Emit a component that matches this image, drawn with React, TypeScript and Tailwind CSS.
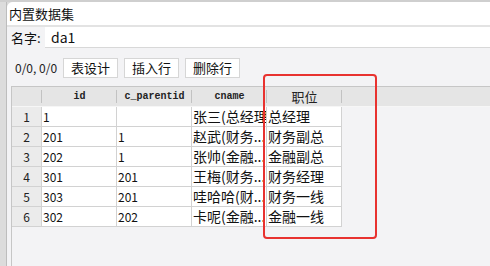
import React from "react";

const rows = [
  ["1", "1", "", "张三(总经理)", "总经理"],
  ["2", "201", "1", "赵武(财务...", "财务副总"],
  ["3", "202", "1", "张帅(金融...", "金融副总"],
  ["4", "301", "201", "王梅(财务...", "财务经理"],
  ["5", "303", "201", "哇哈哈(财...", "财务一线"],
  ["6", "302", "202", "卡呢(金融...", "金融一线"],
];

const sans = { fontFamily: '"Noto Sans CJK SC", "Liberation Sans", sans-serif' };

export default function App() {
  return (
    <div className="relative w-[490px] h-[266px] overflow-hidden bg-[#dadada] flex flex-col" style={sans}>
      <div className="h-[2px] bg-[#cfcfcf] shrink-0" />
      <div className="flex flex-1 min-h-0">
        <div className="w-[7px] bg-[#dcdcdc] border-r border-[#bdbdbd] shrink-0" />
        <div className="flex-1 flex flex-col bg-[#f3f3f5] rounded-tl-[6px] overflow-hidden">
          <div className="h-[25px] bg-white border-b-2 border-[#e3e3e3] flex items-center pl-[2px] text-[13px] text-[#111] shrink-0">
            内置数据集
          </div>
          <div className="flex items-center h-[21px] shrink-0">
            <span className="w-[38px] pl-[4px] text-[13px] text-[#111]">名字:</span>
            <div className="flex-1 h-[21px] bg-white border-b border-[#d8d8d8] flex items-center pl-[6px] text-[14px] text-[#111]">
              da1
            </div>
          </div>
          <div className="flex items-center h-[20px] mt-[10px] shrink-0 pl-[8px]">
            <span className="text-[12px] text-[#222] w-[48px] whitespace-nowrap">0/0, 0/0</span>
            {["表设计", "插入行", "删除行"].map((b) => (
              <div
                key={b}
                className="w-[55px] h-[20px] mr-[6px] bg-white border border-[#d6d6d6] flex items-center justify-center text-[13px] text-[#111]"
              >
                {b}
              </div>
            ))}
          </div>
          <div className="flex-1 mt-[8px] ml-[4px] border-l border-t border-[#c6c6c6] bg-[#f3f3f5] flex flex-col">
            <div className="h-[20px] bg-[#e5e5e5] border-b border-[#f6f6f6] flex shrink-0" style={{ fontFamily: '"Liberation Mono", monospace' }}>
              {[
                [30, ""],
                [75, "id"],
                [75, "c_parentid"],
                [75, "cname"],
                [75, "职位"],
              ].map(([w, t], i) => (
                <div
                  key={i}
                  className="relative flex items-center justify-center font-semibold text-[10px] text-[#222]"
                  style={{ width: w as number }}
                >
                  <span className={i === 4 ? "text-[13px] font-normal" : ""} style={i === 4 ? sans : undefined}>
                    {t}
                  </span>
                  <div className="absolute right-0 top-[3px] h-[13px] w-[1px] bg-[#c2c2c2]" />
                </div>
              ))}
            </div>
            {rows.map((r) => (
              <div key={r[0]} className="flex h-[20px] shrink-0">
                <div className="w-[30px] bg-[#ebebeb] border-r border-b border-[#d2d2d2] flex items-center justify-center text-[12px] text-[#222]">
                  {r[0]}
                </div>
                <div className="w-[75px] bg-white border-r border-b border-[#d2d2d2] flex items-center pl-[1px] text-[12px] text-[#111]">
                  {r[1]}
                </div>
                <div className="w-[75px] bg-white border-r border-b border-[#d2d2d2] flex items-center pl-[1px] text-[12px] text-[#111]">
                  {r[2]}
                </div>
                <div className="w-[75px] bg-white border-r border-b border-[#d2d2d2] flex items-center pl-[1px] text-[14px] text-[#111] overflow-hidden whitespace-nowrap">
                  <span className="overflow-hidden">{r[3]}</span>
                </div>
                <div className="w-[75px] bg-white border-r border-b border-[#d2d2d2] flex items-center pl-[1px] text-[14px] text-[#111] whitespace-nowrap">
                  {r[4]}
                </div>
              </div>
            ))}
          </div>
        </div>
      </div>
      <div className="absolute left-[263px] top-[74px] w-[114px] h-[165px] border-2 border-[#e8322f] rounded-[4px]" />
    </div>
  );
}
